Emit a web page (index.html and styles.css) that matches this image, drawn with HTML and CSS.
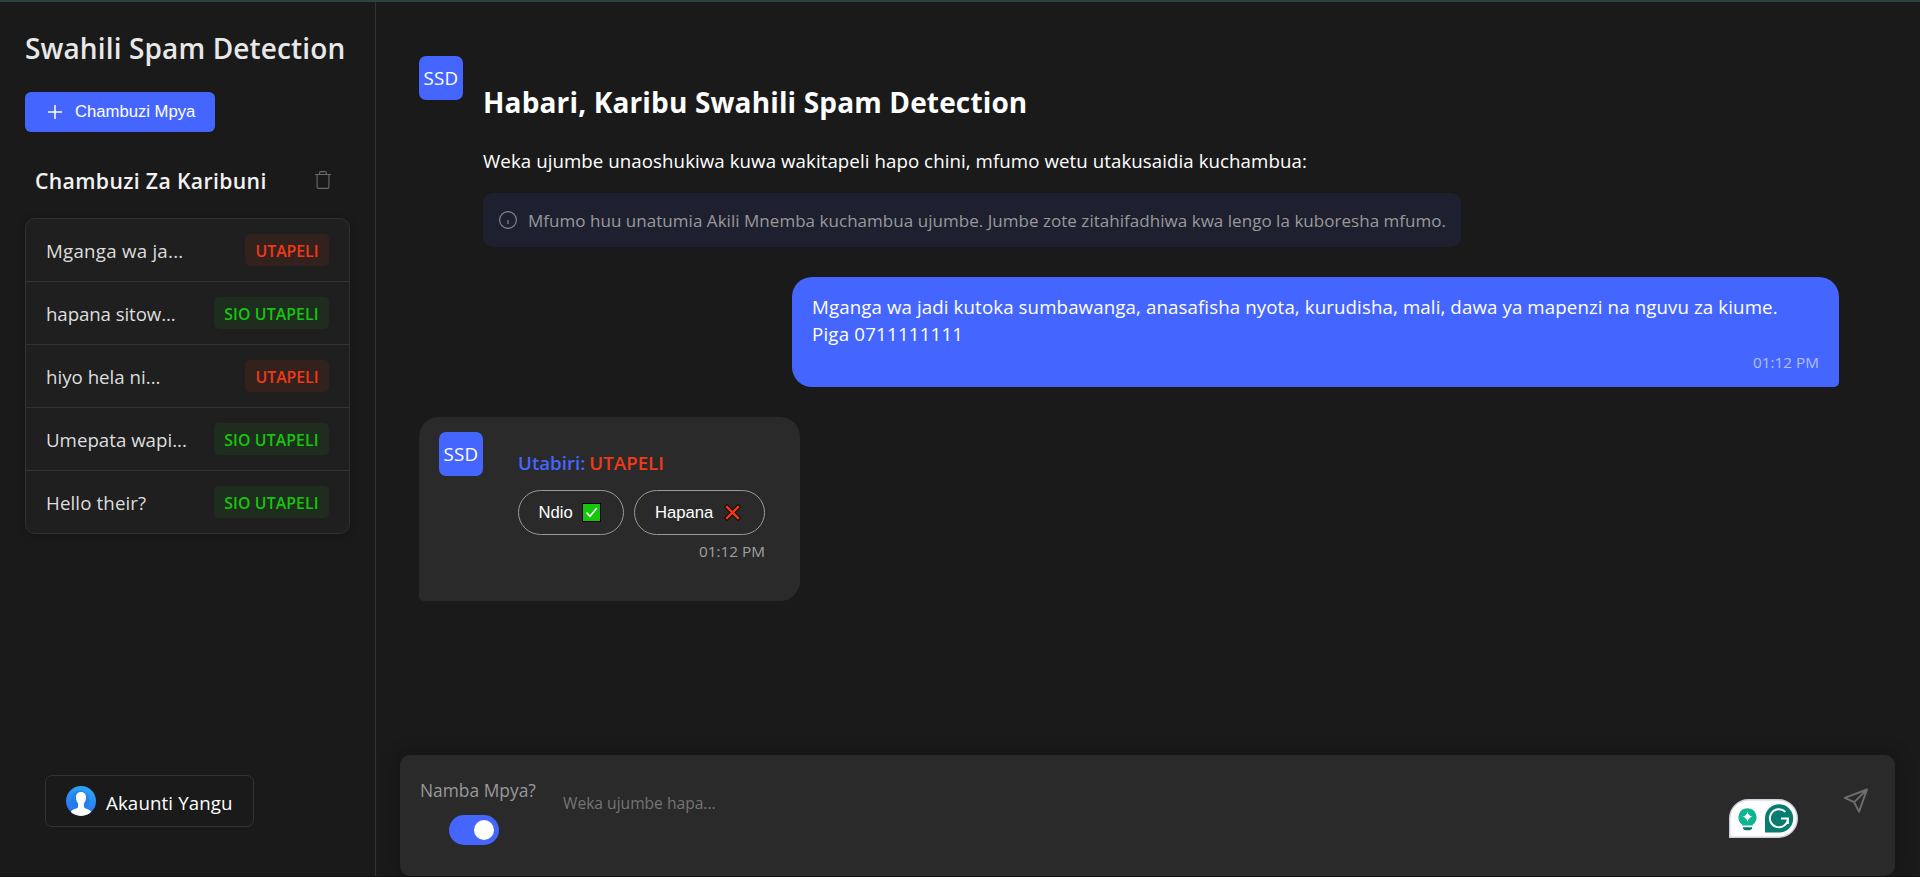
FILE: index.html
```html
<!DOCTYPE html>
<html lang="sw">
<head>
<meta charset="utf-8">
<title>Swahili Spam Detection</title>
<link rel="stylesheet" href="styles.css">
</head>
<body>
<div class="app">
  <aside class="sidebar">
    <h1 class="brand">Swahili Spam Detection</h1>
    <button class="new-btn">
      <svg width="14" height="14" viewBox="0 0 14 14"><path d="M7 0v14M0 7h14" stroke="#fff" stroke-width="1.5"/></svg>
      <span>Chambuzi Mpya</span>
    </button>
    <div class="recent-head">
      <h2 class="recent-title">Chambuzi Za Karibuni</h2>
      <svg class="trash" width="16" height="18" viewBox="0 0 16 18" fill="none" stroke="#6a6a6a" stroke-width="1.1"><path d="M0 3.5h16M4.6 3.5V1.8q0-1.2 1.2-1.2h4.4q1.2 0 1.2 1.2v1.7M2.1 3.5v12.4q0 1.5 1.5 1.5h8.8q1.5 0 1.5-1.5V3.5"/></svg>
    </div>
    <ul class="history">
      <li class="row"><span class="wide">Mganga wa ja...</span><span class="badge spam">UTAPELI</span></li>
      <li class="row"><span class="snug">hapana sitow...</span><span class="badge safe">SIO UTAPELI</span></li>
      <li class="row"><span>hiyo hela ni...</span><span class="badge spam">UTAPELI</span></li>
      <li class="row"><span>Umepata wapi...</span><span class="badge safe">SIO UTAPELI</span></li>
      <li class="row"><span class="loose">Hello their?</span><span class="badge safe">SIO UTAPELI</span></li>
    </ul>
    <div class="account">
      <svg width="30" height="30" viewBox="0 0 30 30">
        <defs><linearGradient id="av" x1="0.7" y1="0" x2="0.4" y2="1"><stop offset="0" stop-color="#2ba8f5"/><stop offset="1" stop-color="#2a6cf0"/></linearGradient><clipPath id="avc"><circle cx="15" cy="15" r="15"/></clipPath></defs>
        <g clip-path="url(#avc)"><rect width="30" height="30" fill="url(#av)"/><circle cx="14" cy="14" r="9.5" fill="#1e7ae0" opacity=".55"/>
        <path d="M15 6c3.3 0 5.2 2.300 5 5.600-.1 3-1 4.400-2 6v3.600c1 1.500 5.500 2 7 4.300V30H5v-4.500c1.500-2.300 6-2.800 7-4.300v-3.600c-1-1.600-1.900-3-2-6C9.800 8.300 11.700 6 15 6z" fill="#fff"/></g>
      </svg>
      <span class="loose">Akaunti Yangu</span>
    </div>
  </aside>
  <main class="main">
    <section class="chat">
      <div class="welcome">
        <div class="logo">SSD</div>
        <div class="welcome-body">
          <h2 class="hello">Habari, Karibu Swahili Spam Detection</h2>
          <p class="lead">Weka ujumbe unaoshukiwa kuwa wakitapeli hapo chini, mfumo wetu utakusaidia kuchambua:</p>
          <div class="info">
            <svg width="18" height="18" viewBox="0 0 18 18"><circle cx="9" cy="9" r="8.400" fill="none" stroke="#888b94" stroke-width="1.100"/><path d="M9 9v4" stroke="#888b94" stroke-width="1.200"/></svg>
            <span>Mfumo huu unatumia Akili Mnemba kuchambua ujumbe. Jumbe zote zitahifadhiwa kwa lengo la kuboresha mfumo.</span>
          </div>
        </div>
      </div>
      <div class="bubble user">
        <p class="text">Mganga wa jadi kutoka sumbawanga, anasafisha nyota, kurudisha, mali, dawa ya mapenzi na nguvu za kiume. <span class="phone">Piga 0711111111</span></p>
        <p class="time">01:12 PM</p>
      </div>
      <div class="bubble bot">
        <div class="logo">SSD</div>
        <div class="bot-body">
          <p class="verdict"><span>Utabiri:</span><span class="result">UTAPELI</span></p>
          <div class="answers">
            <button class="answer yes"><span>Ndio</span>
              <svg width="19" height="19" viewBox="0 0 19 19"><rect x=".5" y=".5" width="18" height="18" fill="#16c60c" stroke="#000"/><path d="M4.500 9.500l3.500 3.800 6.800-8.300" fill="none" stroke="#fff" stroke-width="1.500"/></svg>
            </button>
            <button class="answer no"><span>Hapana</span>
              <svg width="17" height="17" viewBox="0 0 17 17" fill="none" stroke-linecap="square"><path d="M3 3l11 11M14 3L3 14" stroke="#000" stroke-width="4.200"/><path d="M3 3l11 11M14 3L3 14" stroke="#f03a17" stroke-width="2.500"/></svg>
            </button>
          </div>
          <p class="time">01:12 PM</p>
        </div>
      </div>
    </section>
    <form class="composer">
      <div class="number">
        <span class="number-label">Namba Mpya?</span>
        <span class="toggle"><span class="knob"></span></span>
      </div>
      <span class="placeholder">Weka ujumbe hapa...</span>
      <svg class="assist" width="69" height="39" viewBox="0 0 69 39">
        <path d="M.7 38.300V19.500A18.800 18.800 0 0 1 19.500.7h30a18.800 18.800 0 0 1 0 37.600z" fill="#fff" stroke="#cdd0de" stroke-width="1.400"/>
        <path d="M18.500 9.200a9 9 0 0 1 5.300 16.300v1H13.200v-1A9 9 0 0 1 18.500 9.200z" fill="#0fb592"/>
        <path d="M14 28.300h9v1.200q-1 1.800-2.500 1.800h-4q-1.500 0-2.500-1.800z" fill="#087a6b"/>
        <path d="M18.500 12.800q1 4.200 5 5-4 .8-5 5-1-4.200-5-5 4-.8 5-5z" fill="#fff"/>
        <path d="M36 33.500V19.300A14.100 14.100 0 1 1 50.100 33.500z" fill="#087d6f"/>
        <path d="M56.300 12.900A9 9 0 1 0 58.900 19.500h-6.900M58.900 18.500v6.500" fill="none" stroke="#fff" stroke-width="2"/>
      </svg>
      <svg class="send" width="26" height="26" viewBox="0 0 26 26" fill="none" stroke="#6e6e6e" stroke-width="1.900" stroke-linejoin="round"><path d="M24 1.500L1.800 9.800l9.400 4.400L16 23.600zM24 1.500L11.200 14.200"/></svg>
    </form>
  </main>
</div>
</body>
</html>
```
FILE: styles.css
```css
* { box-sizing: border-box; margin: 0; padding: 0; }
body {
  background: #1a1a1a;
  color: #fff;
  font-family: "Open Sans", "Noto Sans", sans-serif;
  font-size: 18.7px;
  line-height: 27px;
  overflow: hidden;
}
span { white-space: nowrap; }
svg { display: block; flex: none; }
button { font-family: "Liberation Sans", Arial, sans-serif; font-size: 16.67px; color: #fff; border: 0; }
.wide { letter-spacing: .25px; }
.loose { letter-spacing: .12px; }
.snug { letter-spacing: -.1px; }
.app { display: flex; height: 877px; border-top: 2px solid #2c4241; border-bottom: 1px solid #141213; }

/* Sidebar */
.sidebar { width: 376px; flex: none; border-right: 1px solid #333; padding: 26px 25px 0; display: flex; flex-direction: column; align-items: flex-start; }
.brand { font-size: 28px; line-height: 40px; font-weight: 600; color: #e8e8e8; letter-spacing: .13px; white-space: nowrap; }
.new-btn { margin-top: 24px; width: 190px; height: 40px; border-radius: 6px; background: #4466ff; display: flex; align-items: center; gap: 13px; padding-left: 23px; }
.recent-head { margin-top: 34px; width: 325px; padding: 0 19px 0 10px; height: 30px; display: flex; justify-content: space-between; align-items: flex-start; }
.recent-title { font-size: 21.2px; line-height: 30px; font-weight: 600; color: #f2f2f2; letter-spacing: .36px; white-space: nowrap; }
.trash { margin-top: 5px; }
.history { margin-top: 22px; width: 325px; list-style: none; border: 1px solid #303030; border-radius: 10px; background: #1f1f1f; box-shadow: 0 2px 10px rgba(0,0,0,.2); }
.row { display: flex; justify-content: space-between; align-items: center; height: 63px; padding: 0 20px; border-bottom: 1px solid #333; color: #ddd; }
.row:last-child { border-bottom: 0; height: 62px; }
.badge { height: 32px; line-height: 34px; border-radius: 5px; font-size: 15.8px; font-weight: 600; display: flex; justify-content: center; }
.spam { width: 84px; color: #f03a17; background: #33211d; }
.safe { width: 115px; color: #16c60c; background: #1e2d1d; letter-spacing: .12px; }
.account { margin: 241px 0 0 20px; width: 209px; height: 52px; border: 1px solid #333; border-radius: 7px; display: flex; align-items: flex-start; gap: 10px; padding: 10px 20px; line-height: 34px; }

/* Conversation */
.main { flex: 1; display: flex; flex-direction: column; }
.chat { height: 753px; padding: 54px 81px 0 43px; display: flex; flex-direction: column; }
.logo { width: 44px; height: 44px; line-height: 44px; border-radius: 7px; background: #4466ff; flex: none; display: flex; justify-content: center; letter-spacing: .3px; }
.welcome { display: flex; gap: 20px; align-items: flex-start; }
.hello { margin-top: 26px; font-size: 28px; line-height: 40px; font-weight: 700; letter-spacing: .15px; }
.lead { margin-top: 25px; line-height: 27px; letter-spacing: .065px; }
.info { margin-top: 19px; width: 978px; height: 54px; border-radius: 10px; background: #1e2030; display: flex; align-items: center; gap: 11px; padding-left: 16px; color: #999; font-size: 17px; letter-spacing: .035px; }
.bubble { border-radius: 20px; }
.user { margin-top: 30px; align-self: flex-end; width: 1047px; height: 110px; background: #4466ff; border-bottom-right-radius: 5px; padding: 16px 20px 0; }
.text { letter-spacing: .107px; }
.phone { letter-spacing: .2px; }
.time { text-align: right; font-size: 15.3px; line-height: 22px; }
.user .time { color: #b0bfff; margin-top: 4px; }
.bot { margin-top: 30px; width: 381px; height: 184px; background: #2a2a2a; border-bottom-left-radius: 5px; display: flex; gap: 35px; padding: 15px 20px 0; }
.bot-body { width: 247px; }
.verdict { margin-top: 17px; height: 28px; line-height: 28px; font-weight: 600; display: flex; gap: 4px; color: #4466ff; }
.result { color: #f03a17; }
.answers { margin-top: 13px; display: flex; gap: 10px; }
.answer { height: 45px; border: 1px solid #999; border-radius: 23px; background: transparent; display: flex; align-items: center; padding-left: 19.5px; }
.yes { width: 106px; gap: 9.5px; }
.no { width: 131px; gap: 11px; padding-left: 20px; }
.bot .time { margin-top: 5px; color: #a0a0a0; }

/* Composer */
.composer { margin-left: 24px; width: 1495px; height: 121px; background: #2a2a2a; border-radius: 10px; display: flex; align-items: flex-start; box-shadow: 0 0 20px rgba(0,0,0,.3); }
.number { margin-left: 20px; width: 143px; padding-top: 22px; }
.number-label { display: block; font-size: 17.4px; line-height: 26px; color: #999; }
.toggle { display: flex; align-items: center; justify-content: flex-end; width: 50px; height: 30px; padding-right: 5px; border-radius: 15px; background: #4466ff; margin: 12px 0 0 29px; }
.knob { width: 20px; height: 20px; border-radius: 50%; background: #fff; }
.placeholder { margin-top: 36px; width: 1166px; font-size: 15.6px; line-height: 24px; color: #757575; }
.assist { margin-top: 44px; }
.send { margin: 33px 0 0 45px; }
```
